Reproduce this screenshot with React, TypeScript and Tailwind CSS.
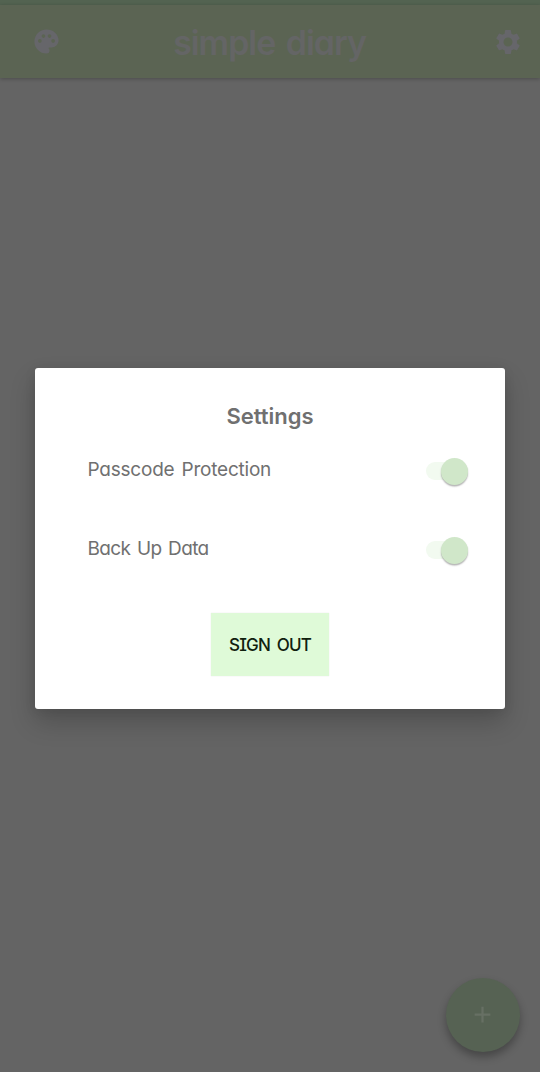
import { MdAdd, MdPalette, MdSettings } from "react-icons/md";

function Toggle() {
  return (
    <button role="switch" aria-checked="true" className="-mt-px flex h-7 w-[42px] items-center justify-end rounded-full">
      <span className="-mr-[27px] h-[18px] w-[42px] rounded-full bg-[#f2faf0]" />
      <span className="size-[27px] shrink-0 rounded-full bg-[#d0e7c9] shadow-[0_1.5px_1.5px_rgba(0,0,0,0.3)]" />
    </button>
  );
}

function SettingRow({ label, spacing }: { label: string; spacing: string }) {
  return (
    <div className="flex h-[79px] items-start justify-between pr-[37px] pl-[52.5px]">
      <span className={`text-[19px] leading-[24px] whitespace-nowrap ${spacing}`}>{label}</span>
      <Toggle />
    </div>
  );
}

export default function App() {
  return (
    <div className="flex h-[1072px] w-[540px] flex-col overflow-hidden bg-[#646464] font-[Inter,Lato,sans-serif] [font-feature-settings:'cv11','cv08']">
      <div className="h-[5px] shrink-0 bg-[#536351]" />
      <header className="grid h-[73px] shrink-0 grid-cols-[1fr_auto_1fr] items-center bg-[#5b6453] pr-[17px] pl-[32px] text-[#66666a] shadow-[0_1px_4px_rgba(0,0,0,0.24)]">
        <MdPalette size={29} />
        <h1 className="mt-[3px] -ml-[16px] text-[34px] leading-none font-semibold tracking-[-1.05px] text-[#646565] [word-spacing:3px]">simple diary</h1>
        <MdSettings size={30} className="justify-self-end" />
      </header>

      <main className="flex flex-1 flex-col">
        <section className="mx-[35px] mt-[290px] flex h-[341px] flex-col rounded-[3px] bg-white text-[#707070] shadow-[0_13px_26px_rgba(0,0,0,0.2),0_2px_12px_rgba(0,0,0,0.08)]">
          <h2 className="mt-[33px] text-center text-[22px] leading-[30px] font-semibold">Settings</h2>
          <div className="mt-[27px] flex flex-col">
            <SettingRow label="Passcode Protection" spacing="tracking-[-0.22px] [word-spacing:2px]" />
            <SettingRow label="Back Up Data" spacing="tracking-[-0.65px] [word-spacing:2px]" />
          </div>
          <button className="-mt-[3px] h-[63px] w-[118px] self-center bg-[#dffad8] pt-[2px] text-[17px] font-medium tracking-[-0.8px] whitespace-nowrap text-[#10200e] shadow-[0_0_1px_rgba(0,0,0,0.12)] [word-spacing:3px]">
            SIGN OUT
          </button>
        </section>
        <button aria-label="Add entry" className="mt-auto mr-[20.5px] mb-[20.5px] flex size-[74px] items-center justify-center self-end rounded-full bg-[#566253] text-[#677064] shadow-[0_5px_9px_rgba(0,0,0,0.3)]">
          <MdAdd size={27} />
        </button>
      </main>
    </div>
  );
}
